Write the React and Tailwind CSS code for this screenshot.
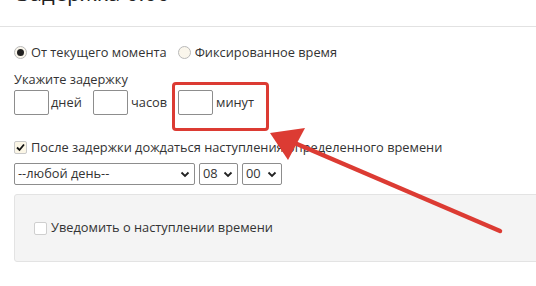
import React from "react";

function Radio({ checked }) {
  return (
    <span className="inline-flex h-[13px] w-[13px] items-center justify-center rounded-full border border-[#b9b9b9] bg-[#faf6ec]">
      {checked && <span className="h-[7px] w-[7px] rounded-full bg-[#222]" />}
    </span>
  );
}

function Check({ checked }) {
  return (
    <span className="inline-flex h-[13px] w-[13px] items-center justify-center rounded-[2px] border border-[#c9c9c9] bg-[#fbf6e6]">
      {checked && (
        <svg width="11" height="11" viewBox="0 0 11 11">
          <path d="M2 5.5 L4.5 8 L9 2.5" fill="none" stroke="#111" strokeWidth="1.8" />
        </svg>
      )}
    </span>
  );
}

function Box() {
  return <span className="inline-block h-[25px] w-[35px] shrink-0 rounded-[2px] border border-[#8d8d8d] bg-white" />;
}

function Select({ label, w }) {
  return (
    <span
      className={`inline-flex h-[22px] items-center justify-between rounded-[2px] border border-[#8d8d8d] bg-white pl-[3px] pr-[4px] ${w}`}
    >
      <span>{label}</span>
      <svg width="10" height="7" viewBox="0 0 10 7">
        <path d="M1.5 1.5 L5 5 L8.5 1.5" fill="none" stroke="#222" strokeWidth="1.8" />
      </svg>
    </span>
  );
}

export default function App() {
  return (
    <div className="relative h-[286px] w-[536px] overflow-hidden bg-white text-[12.8px] text-[#333] [font-family:'Open_Sans',sans-serif]">
      <div className="relative h-[27px] border-b border-[#e2e2e2]">
        <div className="absolute left-[17px] top-[-21px] text-[22px] leading-[26px] text-[#222]">Задержка 0:00</div>
      </div>
      <div className="px-[14px] pt-[17px]">
        <div className="flex h-[17px] items-center">
          <Radio checked />
          <span className="ml-[4px]">От текущего момента</span>
          <span className="ml-[11px] inline-flex items-center">
            <Radio />
          </span>
          <span className="ml-[4px]">Фиксированное время</span>
        </div>
        <div className="mt-[10px] leading-[17px]">Укажите задержку</div>
        <div className="mt-[2px] flex h-[25px] items-center">
          <Box />
          <span className="ml-[2px] w-[42px]">дней</span>
          <Box />
          <span className="ml-[3px] w-[47px]">часов</span>
          <Box />
          <span className="ml-[3px]">минут</span>
        </div>
        <div className="mt-[24px] flex h-[17px] items-center">
          <Check checked />
          <span className="ml-[4px]">После задержки дождаться наступления определенного времени</span>
        </div>
        <div className="mt-[7px] flex items-center gap-[4px]">
          <Select label="--любой день--" w="w-[181px]" />
          <Select label="08" w="w-[39px]" />
          <Select label="00" w="w-[40px]" />
        </div>
        <div className="mt-[9px] mr-[-20px] flex h-[68px] items-center rounded-[3px] border border-[#e3e3e3] bg-[#f4f4f4] pl-[19px]">
          <span className="inline-flex h-[13px] w-[13px] rounded-[2px] border border-[#cfcfcf] bg-white" />
          <span className="ml-[4px]">Уведомить о наступлении времени</span>
        </div>
      </div>
      <div className="absolute left-[172px] top-[82px] h-[49px] w-[97px] rounded-[4px] border-[3px] border-[#dc3b33]" />
      <svg className="absolute left-0 top-0" width="536" height="286" viewBox="0 0 536 286">
        <line x1="500" y1="231" x2="290" y2="141" stroke="#dc3b33" strokeWidth="4.5" strokeLinecap="round" />
        <polygon points="270,133 305,128 288,160" fill="#dc3b33" />
      </svg>
    </div>
  );
}
